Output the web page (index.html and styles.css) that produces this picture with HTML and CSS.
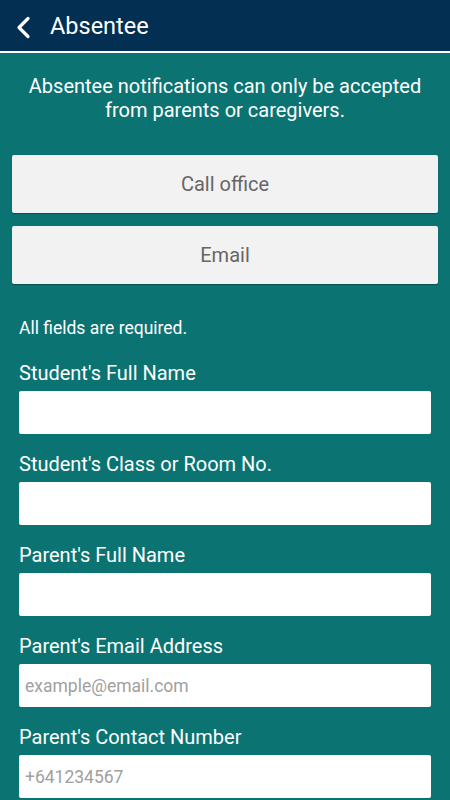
FILE: index.html
```html
<!DOCTYPE html>
<html lang="en">
<head>
  <meta charset="UTF-8">
  <meta name="viewport" content="width=device-width, initial-scale=1.0">
  <title>Absentee</title>
  <link rel="stylesheet" href="styles.css">
</head>
<body>
  <header class="topbar">
    <svg class="back" width="18" height="24" viewBox="0 0 18 24">
      <polyline points="14,3.5 5,12.5 14,21.5" fill="none" stroke="#fff" stroke-width="3.2" stroke-linecap="round" stroke-linejoin="round"/>
    </svg>
    <h1>Absentee</h1>
  </header>

  <main class="content">
    <p class="intro">Absentee notifications can only be accepted from parents or caregivers.</p>

    <div class="actions">
      <button class="action-btn">Call office</button>
      <button class="action-btn">Email</button>
    </div>

    <form class="absent-form">
      <p class="note">All fields are required.</p>

      <label class="field">
        <span class="field-label">Student's Full Name</span>
        <input type="text">
      </label>
      <label class="field">
        <span class="field-label">Student's Class or Room No.</span>
        <input type="text">
      </label>
      <label class="field">
        <span class="field-label">Parent's Full Name</span>
        <input type="text">
      </label>
      <label class="field">
        <span class="field-label">Parent's Email Address</span>
        <input type="email" placeholder="example@email.com">
      </label>
      <label class="field">
        <span class="field-label">Parent's Contact Number</span>
        <input type="tel" placeholder="+641234567">
      </label>
    </form>
  </main>
</body>
</html>
```

FILE: styles.css
```css
body {
  margin: 0;
  font-family: Roboto, 'Noto Sans', sans-serif;
  background: #0b7372;
  color: #fff;
  overflow: hidden;
}

.topbar {
  height: 51px;
  background: #032f52;
  border-bottom: 2px solid #fff;
  display: flex;
  align-items: center;
  padding-left: 14px;
}

.topbar .back {
  display: block;
  margin-top: 3px;
}

.topbar h1 {
  margin: 0 0 0 18px;
  font-size: 23.5px;
  font-weight: normal;
}

.content {
  padding: 0 12px;
}

.intro {
  margin: 21px 0 0;
  text-align: center;
  font-size: 20px;
  line-height: 24px;
}

.actions {
  display: flex;
  flex-direction: column;
  gap: 13px;
  margin-top: 33px;
}

.action-btn {
  height: 58px;
  border: none;
  border-radius: 2px;
  background: #f2f2f2;
  box-shadow: 0 1px 1px rgba(0, 0, 0, 0.3);
  color: #666;
  font-family: inherit;
  font-size: 20px;
}

.absent-form {
  padding: 0 7px;
}

.note {
  margin: 34px 0 0;
  font-size: 17.5px;
  line-height: 20px;
}

.field {
  display: flex;
  flex-direction: column;
  margin-top: 23px;
}

.field + .field {
  margin-top: 18px;
}

.field-label {
  font-size: 20px;
  line-height: 24px;
  margin-bottom: 6px;
}

.field input {
  height: 43px;
  box-sizing: border-box;
  border: none;
  border-radius: 2px;
  background: #fff;
  padding: 0 6px;
  font-family: inherit;
  font-size: 17.5px;
  color: #333;
}

.field input::placeholder {
  color: #a0a0a0;
}
```
